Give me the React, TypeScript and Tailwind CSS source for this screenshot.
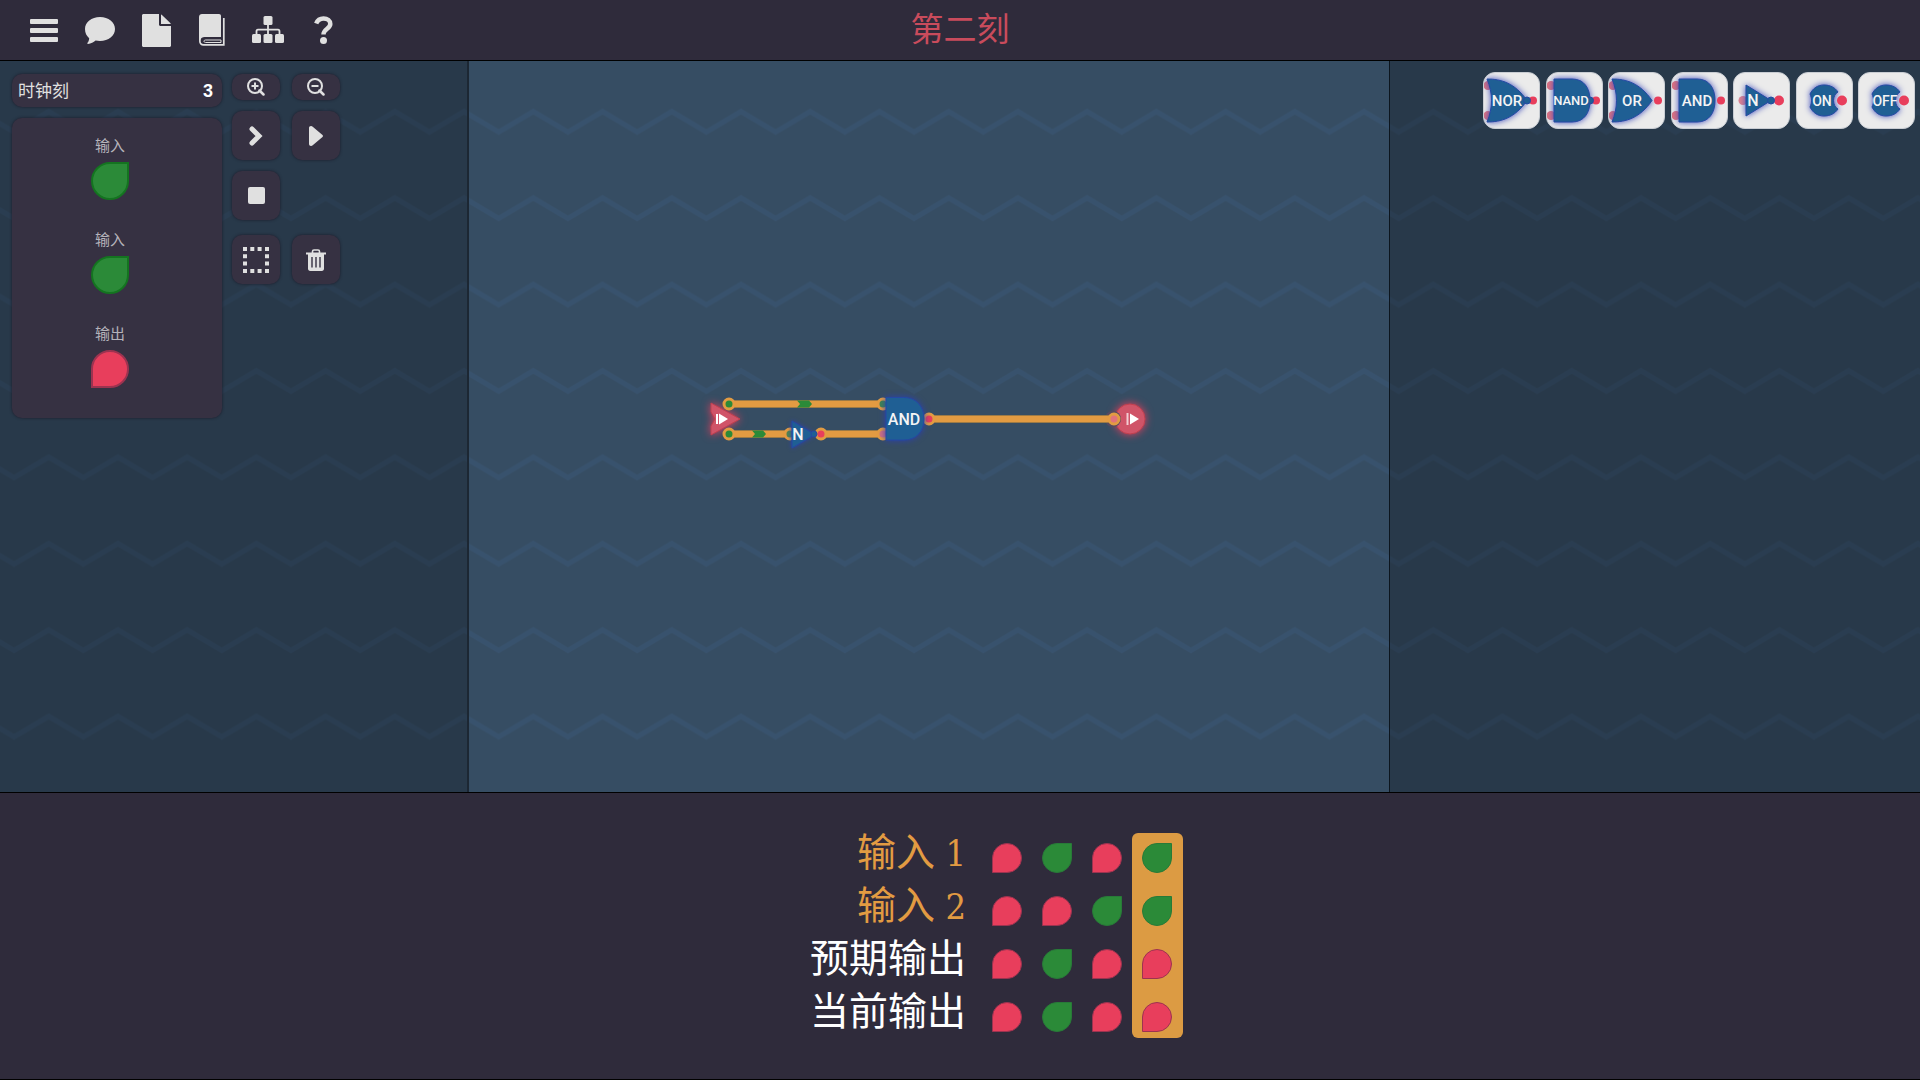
import type { ReactNode } from "react";

type Signal = "on" | "off";

const rows: { label: string; index?: number; signals: Signal[] }[] = [
  { label: "输入", index: 1, signals: ["off", "on", "off", "on"] },
  { label: "输入", index: 2, signals: ["off", "off", "on", "on"] },
  { label: "预期输出", signals: ["off", "on", "off", "off"] },
  { label: "当前输出", signals: ["off", "on", "off", "off"] },
];

const pins: { label: string; signal: Signal }[] = [
  { label: "输入", signal: "on" },
  { label: "输入", signal: "on" },
  { label: "输出", signal: "off" },
];

/* Header icons */
const BarsIcon = () => (
  <svg width="28" height="24" viewBox="0 0 28 24" fill="currentColor">
    <rect x="0" y="1" width="28" height="5" rx="1" />
    <rect x="0" y="10" width="28" height="5" rx="1" />
    <rect x="0" y="19" width="28" height="5" rx="1" />
  </svg>
);

const CommentIcon = () => (
  <svg width="32" height="28" viewBox="0 0 32 28" fill="currentColor">
    <path d="M16 1C24.500 1 31 6.300 31 13S24.500 25 16 25c-1.600 0-3-.1-4.400-.4C9.500 26.300 7 27.600 4 27.900c-.7 0-.9-.6-.5-1.100C4.600 25.500 5 24.300 5.200 22.200 2.500 20 1 16.800 1 13 1 6.300 7.500 1 16 1z" />
  </svg>
);

const FileIcon = () => (
  <svg width="29" height="33" viewBox="0 0 29 33" fill="currentColor">
    <path d="M1.500 0H17v10.500c0 .8.700 1.500 1.500 1.500H29v19.500c0 .8-.7 1.500-1.500 1.500h-26C.7 33 0 32.300 0 31.500v-30C0 .7.7 0 1.500 0z" />
    <path d="M19 .5c.5.200.8.400 1.200.8L28 8.800c.4.400.600.700.8 1.200H19z" />
  </svg>
);

const BookIcon = () => (
  <svg width="26" height="32" viewBox="0 0 26 32" fill="none" stroke="currentColor">
    <path d="M3 0h17c1.200 0 2 .8 2 2v21H5.500C3.500 23 2 24 1.500 25.500L0 27V3c0-1.700 1.300-3 3-3z" fill="currentColor" stroke="none" />
    <path d="M24.800 4v26.800H4.500C2.300 30.800.9 29.300.9 27.500V24" strokeWidth="1.700" />
    <path d="M22 26H6.500c-2 0-2 2.500 0 2.500H22z" strokeWidth="1" />
  </svg>
);

const SitemapIcon = () => (
  <svg width="32" height="28" viewBox="0 0 32 28" fill="currentColor">
    <rect x="11.500" y="0" width="9" height="9" rx="1.500" />
    <rect x="0" y="18" width="9" height="9" rx="1.500" />
    <rect x="11.500" y="18" width="9" height="9" rx="1.500" />
    <rect x="23" y="18" width="9" height="9" rx="1.500" />
    <path d="M16 8v11M4.500 19v-3.500c0-1 .5-1.800 1.500-1.800h20c1 0 1.500.8 1.500 1.800V19" fill="none" stroke="currentColor" strokeWidth="1.800" />
  </svg>
);

const QuestionIcon = () => (
  <svg width="20" height="28" viewBox="0 0 20 28" fill="none" stroke="currentColor">
    <path d="M2.200 7.500C3.600 4 6 2.500 9.500 2.500c4 0 6.800 2.300 6.800 5.500 0 4.800-6.800 4.700-6.800 10.500" strokeWidth="4.500" />
    <circle cx="9.500" cy="24.500" r="3.500" fill="currentColor" stroke="none" />
  </svg>
);

const menu = [
  { name: "菜单", icon: <BarsIcon /> },
  { name: "评论", icon: <CommentIcon /> },
  { name: "文件", icon: <FileIcon /> },
  { name: "手册", icon: <BookIcon /> },
  { name: "关卡", icon: <SitemapIcon /> },
  { name: "帮助", icon: <QuestionIcon /> },
];

/* Toolbar icons */
const ZoomIcon = ({ plus = false }: { plus?: boolean }) => (
  <svg width="18" height="18" viewBox="0 0 18 18" fill="none" stroke="currentColor">
    <circle cx="8" cy="8" r="7" strokeWidth="2" />
    <path d="M12.500 12.500l4 4" strokeWidth="2.500" strokeLinecap="round" />
    <path d={plus ? "M4.500 8h7M8 4.500v7" : "M4.500 8h7"} strokeWidth="2" />
  </svg>
);

const ChevronIcon = () => (
  <svg width="14" height="20" viewBox="0 0 14 20" fill="none" stroke="currentColor">
    <path d="M3 3l7 7-7 7" strokeWidth="5" strokeLinecap="round" />
  </svg>
);

const PlayIcon = () => (
  <svg width="14" height="20" viewBox="0 0 14 20" fill="currentColor">
    <path d="M0 2C0 0 2.500-.6 4 1l9.500 8c.6.6.6 1.400 0 2L4 19c-1.500 1.600-4 1-4-1z" />
  </svg>
);

const StopIcon = () => (
  <svg width="17" height="17" viewBox="0 0 17 17" fill="currentColor">
    <rect width="17" height="17" rx="2" />
  </svg>
);

const SelectIcon = () => (
  <svg width="26" height="26" viewBox="0 0 26 26" fill="currentColor">
    <path d="M0 0h4v4H0zM7.300 0h4v4h-4zM14.600 0h4v4h-4zM22 0h4v4h-4zM0 7.300h4v4H0zM22 7.300h4v4h-4zM0 14.600h4v4H0zM22 14.600h4v4h-4zM0 22h4v4H0zM7.300 22h4v4h-4zM14.600 22h4v4h-4zM22 22h4v4h-4z" />
  </svg>
);

const TrashIcon = () => (
  <svg width="20" height="22" viewBox="0 0 20 22" fill="none" stroke="currentColor">
    <path d="M6.500 4V2.500c0-1 .5-1.500 1.500-1.500h4c1 0 1.500.5 1.500 1.500V4" strokeWidth="1.600" />
    <path d="M0 4.500h20" strokeWidth="2" />
    <path d="M2 5h16v14.500c0 1.500-.8 2.500-2.300 2.500H4.300C2.800 22 2 21 2 19.500z" fill="currentColor" stroke="none" />
    <path d="M6 8v10.500M10 8v10.500M14 8v10.500" stroke="#363142" strokeWidth="1.400" />
  </svg>
);

function ToolButton({ name, small, children }: { name: string; small?: boolean; children: ReactNode }) {
  return (
    <button
      aria-label={name}
      className={`flex w-12 items-center justify-center rounded-[10px] bg-[#363142] text-[#e0e0e0] shadow-[0_0_3px_#1b1c2a] ${
        small ? "h-[26px] pb-px" : "h-[49px]"
      }`}
    >
      {children}
    </button>
  );
}

function Drop({ signal, large }: { signal: Signal; large?: boolean }) {
  const size = large ? "h-[38px] w-[38px]" : "h-[30px] w-[30px]";
  const ring = large ? "border-2" : "border";
  const look =
    signal === "on"
      ? `rounded-tr-none bg-[#2b8a38] ${large ? "border-[#147420]" : "border-[#287a38]"}`
      : "rounded-bl-none bg-[#e83e5c] border-[#9c3350]";
  return <span aria-label={signal} className={`block rounded-full ${size} ${ring} ${look}`} />;
}

/* Gates */
const bodies = {
  or: "M4 7C18 7 32 11 44 28.500 32 46 18 50 4 50 10 36 10 21 4 7z",
  and: "M8 7h18C38 7 44 16 44 28.500S38 50 26 50H8z",
  not: "M13 13v31L38 28.500z",
  source: "M14 22C17 16 22 13 28 13c6 0 11 2.500 14 7-6 3-6 14 0 17-3 4.500-8 7-14 7-6 0-11-3-14-9 2-4 2-9 0-13z",
};

const gates: { name: string; body: keyof typeof bodies; size: number; x: number; inverted?: boolean }[] = [
  { name: "NOR", body: "or", size: 15, x: 24, inverted: true },
  { name: "NAND", body: "and", size: 13, x: 25, inverted: true },
  { name: "OR", body: "or", size: 15, x: 24 },
  { name: "AND", body: "and", size: 15, x: 26 },
  { name: "N", body: "not", size: 16, x: 20, inverted: true },
  { name: "ON", body: "source", size: 14, x: 26 },
  { name: "OFF", body: "source", size: 14, x: 27 },
];

const gateFont = "font-[Roboto,sans-serif] font-medium";

function GateTile({ name, body, size, x, inverted }: (typeof gates)[number]) {
  const twoPins = body === "or" || body === "and";
  const out = twoPins ? 50 : 46;
  return (
    <button
      aria-label={name}
      className="h-[57px] w-[57px] overflow-hidden rounded-[12px] border border-[#c9cdd3] bg-[#ebebeb]"
    >
      <svg viewBox="1 1 55 55" className="h-full w-full">
        {twoPins && (
          <g fill="#dd7280">
            <circle cx="5" cy="13.500" r="4.500" />
            <circle cx="5" cy="43.500" r="4.500" />
          </g>
        )}
        {body === "not" && <circle cx="10" cy="28.500" r="4.500" fill="#dd8290" />}
        <path d={bodies[body]} fill="#1f5f94" stroke="#2549a4" strokeWidth="1" className="drop-shadow-[0_0_3px_#3a48b8]" />
        <circle cx={out} cy="28.500" r={twoPins ? 4 : 5} fill="#e83e5c" />
        {inverted && <circle cx={twoPins ? 44 : 38} cy="28.500" r="3.500" fill="#1f5f94" stroke="#2549a4" />}
        <text x={x} y={28.5 + size * 0.36} fontSize={size} textAnchor="middle" fill="#f4f4f4" className={gateFont}>
          {name}
        </text>
      </svg>
    </button>
  );
}

function Wire({ x1, x2, y }: { x1: number; x2: number; y: number }) {
  return (
    <>
      <path d={`M${x1} ${y}H${x2}`} stroke="#9c7a46" strokeWidth="8" />
      <path d={`M${x1} ${y}H${x2}`} stroke="#e29b42" strokeWidth="6" />
    </>
  );
}

function Joint({ x, y, fill }: { x: number; y: number; fill: string }) {
  return <circle cx={x} cy={y} r="5" fill={fill} stroke="#e29b42" strokeWidth="3" />;
}

function Circuit() {
  return (
    <svg width="458" height="74" viewBox="700 390 458 74" className="shrink-0 overflow-visible">
      <path d="M711 403v9l4 7-4 7v9l29-16z" fill="#d05468" stroke="#c0404f" className="drop-shadow-[0_0_4px_#e83e5c]" />
      <path d="M717 414v10" stroke="#fff" strokeWidth="2" />
      <path d="M719 413.500v11l9-5.500z" fill="#fff" />

      <Wire x1={729} x2={883} y={404} />
      <Wire x1={729} x2={790} y={434} />
      <Wire x1={821} x2={883} y={434} />
      <path d="M797 400.500h12l3 3.500-3 3.500h-12l3-3.500z" fill="#2b8a38" />
      <path d="M752 430.500h11l3 3.500-3 3.500h-11l3-3.500z" fill="#2b8a38" />

      <circle cx="1130" cy="419" r="15" fill="#d05468" stroke="#c0404f" className="drop-shadow-[0_0_4px_#e83e5c]" />
      <circle cx="1113" cy="419" r="8" fill="#57495f" />
      <Wire x1={929} x2={1110} y={419} />
      <path d="M1127.500 413v12" stroke="#f3cdd2" strokeWidth="2" />
      <path d="M1130 413.500v11l9-5.500z" fill="#fff" />

      <Joint x={729} y={404} fill="#2b8a38" />
      <Joint x={729} y={434} fill="#2b8a38" />
      <Joint x={790} y={434} fill="#4f8350" />
      <Joint x={821} y={434} fill="#e83e5c" />
      <Joint x={883} y={404} fill="#3f8450" />
      <Joint x={883} y={434} fill="#cf7080" />
      <Joint x={929} y={419} fill="#e83e5c" />
      <Joint x={1114} y={419} fill="#e2727a" />

      <g fill="#1f5f94" stroke="#2549a4">
        <path d="M792 421v27l23-13.500z" className="drop-shadow-[0_0_2px_#2b3fb0]" />
        <circle cx="814" cy="434" r="3" />
        <path d="M886 397.500h18c12 0 20 9 20 21.500s-8 21-20 21h-18z" className="drop-shadow-[0_0_3px_#2b3fb0]" />
      </g>
      <g fill="#f4f4f4" fontSize="16" textAnchor="middle" className={gateFont}>
        <text x="798" y="440">N</text>
        <text x="904" y="425">AND</text>
      </g>
    </svg>
  );
}

export default function App() {
  return (
    <div className="flex h-screen flex-col overflow-hidden bg-[#2f2b3b] font-['Noto_Sans','Noto_Sans_CJK_SC',sans-serif] text-white">
      <header className="grid h-[61px] shrink-0 grid-cols-[1fr_auto_1fr] items-center border-b border-black">
        <nav className="ml-4 flex text-[#e0e0e0]">
          {menu.map((item) => (
            <button key={item.name} aria-label={item.name} className="flex h-[60px] w-14 items-center justify-center">
              {item.icon}
            </button>
          ))}
        </nav>
        <h1 className="pb-1.5 font-['Noto_Sans_CJK_SC',sans-serif] text-[33px] leading-10 font-normal text-[#c94b5c]">第二刻</h1>
      </header>

      <main className="relative flex min-h-0 flex-1 bg-[#364d63]">
        {/* Zigzag backdrop */}
        <svg className="absolute inset-0 h-full w-full" aria-hidden="true">
          <pattern id="waves" x="14.100" y="19" width="69.230" height="86.400" patternUnits="userSpaceOnUse">
            <path d="M-5 49.500L0 52 34.600 31.500 69.230 52 74 49.500" fill="none" stroke="#38526d" strokeWidth="5" />
          </pattern>
          <rect width="100%" height="100%" fill="url(#waves)" />
        </svg>

        <aside className="relative flex w-[469px] shrink-0 items-start border-r-2 border-[#1c2733] bg-black/25 pt-[13px] pl-3">
          <div className="flex w-[210px] flex-col gap-[11px]">
            <div className="flex h-[33px] items-center justify-between rounded-[10px] bg-[#363142] pr-[9px] pl-[6px] text-[17px] shadow-[0_0_3px_#1b1c2a]">
              <span className="text-[#e0e0e0]">时钟刻</span>
              <span className="font-['Liberation_Sans',sans-serif] text-lg font-bold">3</span>
            </div>
            <div className="flex h-[300px] flex-col items-center gap-4 rounded-[10px] bg-[#363142] pt-4 pr-[14px] shadow-[0_0_3px_#1b1c2a]">
              {pins.map((pin, i) => (
                <div key={i} className="flex h-[78px] flex-col items-center gap-[6px]">
                  <span className="text-[15px] leading-[22px] text-[#b5b3ba]">{pin.label}</span>
                  <Drop signal={pin.signal} large />
                </div>
              ))}
            </div>
          </div>

          <div className="ml-[10px] flex flex-col gap-[11px]">
            <div className="flex gap-3">
              <ToolButton name="放大" small><ZoomIcon plus /></ToolButton>
              <ToolButton name="缩小" small><ZoomIcon /></ToolButton>
            </div>
            <div className="flex gap-3">
              <ToolButton name="单步"><ChevronIcon /></ToolButton>
              <ToolButton name="运行"><PlayIcon /></ToolButton>
            </div>
            <ToolButton name="停止"><StopIcon /></ToolButton>
            <div className="mt-1 flex gap-3">
              <ToolButton name="选择"><SelectIcon /></ToolButton>
              <ToolButton name="删除"><TrashIcon /></ToolButton>
            </div>
          </div>
        </aside>

        <section className="relative flex min-w-0 flex-1 items-center justify-center">
          <Circuit />
        </section>

        <aside className="relative flex w-[531px] shrink-0 items-start justify-end border-l border-[#0c151e] bg-black/25 pt-[11px] pr-[5px]">
          <div className="flex w-[432px] justify-between">
            {gates.map((gate) => (
              <GateTile key={gate.name} {...gate} />
            ))}
          </div>
        </aside>
      </main>

      <footer className="h-[288px] shrink-0 border-t border-b border-black pt-10">
        <table className="mx-auto border-collapse">
          <tbody>
            {rows.map((row, r) => (
              <tr key={r} className={r === rows.length - 1 ? "h-[46px]" : "h-[53px]"}>
                <th
                  scope="row"
                  className={`w-[245px] pr-4 text-right align-top font-['Noto_Sans_CJK_SC',sans-serif] text-[39px] leading-8 font-normal ${
                    row.index ? "text-[#e29b42]" : "text-white"
                  }`}
                >
                  {row.label}
                  {row.index && (
                    <span className="font-['DejaVu_Serif_Condensed','DejaVu_Serif',serif] text-[36px]"> {row.index}</span>
                  )}
                </th>
                {row.signals.map((signal, c) => (
                  <td
                    key={c}
                    className={`align-top px-[10px] pt-[10px] ${
                      c === 3
                        ? `w-[51px] bg-[#dc9b43] ${r === 0 ? "rounded-t-md" : ""} ${r === rows.length - 1 ? "rounded-b-md" : ""}`
                        : "w-[50px]"
                    }`}
                  >
                    <Drop signal={signal} />
                  </td>
                ))}
              </tr>
            ))}
          </tbody>
        </table>
      </footer>
    </div>
  );
}
